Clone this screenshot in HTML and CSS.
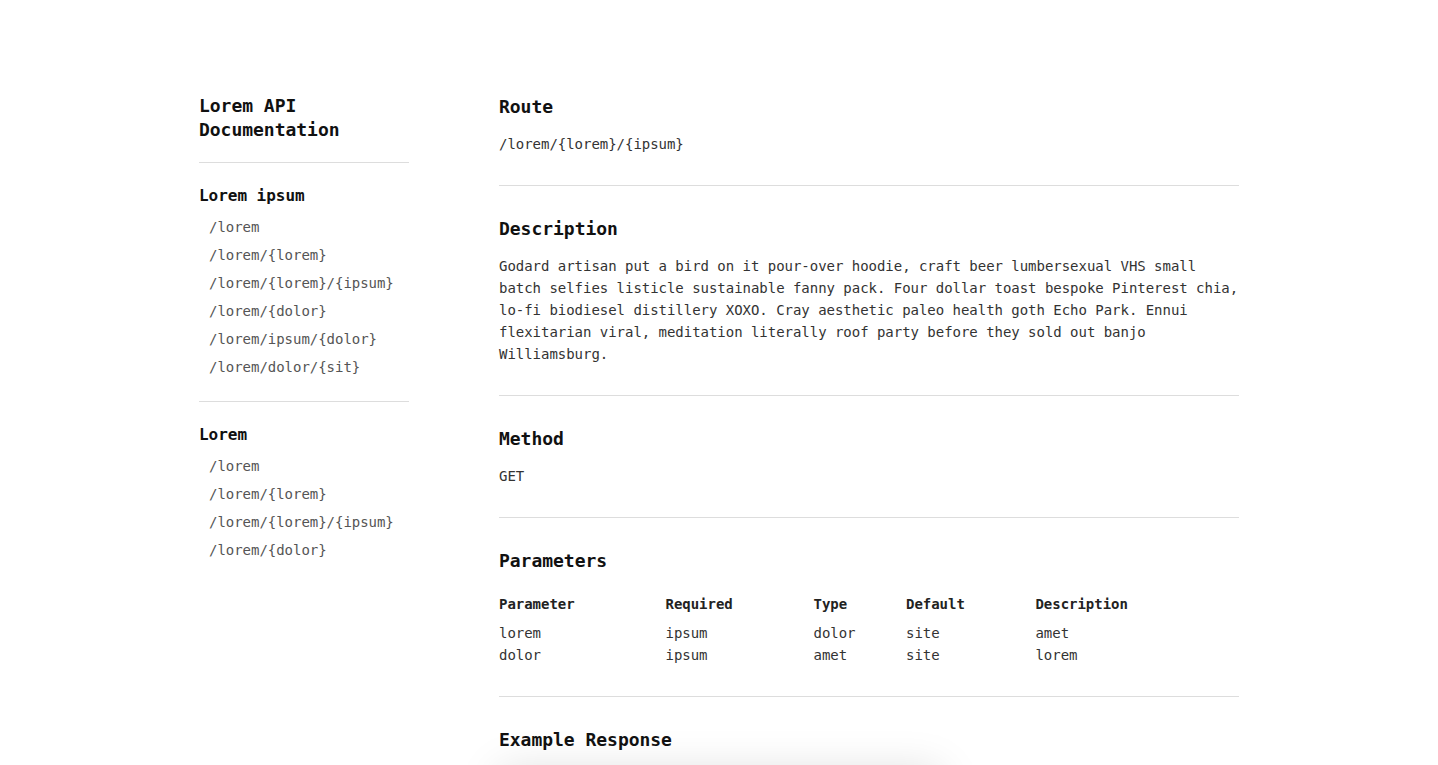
FILE: index.html
```html
<!DOCTYPE html>
<html lang="en">
<head>
<meta charset="utf-8">
<title>Lorem API Documentation</title>
<link rel="stylesheet" href="styles.css">
</head>
<body>
<div class="page">
  <aside class="sidebar">
    <h1 class="doc-title">Lorem API Documentation</h1>
    <div class="nav-group">
      <h3 class="nav-heading">Lorem ipsum</h3>
      <ul class="nav-list">
        <li><a class="nav-link" href="#">/lorem</a></li>
        <li><a class="nav-link" href="#">/lorem/{lorem}</a></li>
        <li><a class="nav-link" href="#">/lorem/{lorem}/{ipsum}</a></li>
        <li><a class="nav-link" href="#">/lorem/{dolor}</a></li>
        <li><a class="nav-link" href="#">/lorem/ipsum/{dolor}</a></li>
        <li><a class="nav-link" href="#">/lorem/dolor/{sit}</a></li>
      </ul>
    </div>
    <div class="nav-group last">
      <h3 class="nav-heading">Lorem</h3>
      <ul class="nav-list">
        <li><a class="nav-link" href="#">/lorem</a></li>
        <li><a class="nav-link" href="#">/lorem/{lorem}</a></li>
        <li><a class="nav-link" href="#">/lorem/{lorem}/{ipsum}</a></li>
        <li><a class="nav-link" href="#">/lorem/{dolor}</a></li>
      </ul>
    </div>
  </aside>
  <main class="content">
    <section class="block first">
      <h2 class="block-title">Route</h2>
      <p class="text">/lorem/{lorem}/{ipsum}</p>
    </section>
    <section class="block">
      <h2 class="block-title">Description</h2>
      <p class="text">Godard artisan put a bird on it pour-over hoodie, craft beer lumbersexual VHS small batch selfies listicle sustainable fanny pack. Four dollar toast bespoke Pinterest chia, lo-fi biodiesel distillery XOXO. Cray aesthetic paleo health goth Echo Park. Ennui flexitarian viral, meditation literally roof party before they sold out banjo Williamsburg.</p>
    </section>
    <section class="block">
      <h2 class="block-title">Method</h2>
      <p class="text">GET</p>
    </section>
    <section class="block">
      <h2 class="block-title">Parameters</h2>
      <div class="params-wrap">
        <table class="params">
          <thead>
            <tr><th>Parameter</th><th>Required</th><th>Type</th><th>Default</th><th>Description</th></tr>
          </thead>
          <tbody>
            <tr><td>lorem</td><td>ipsum</td><td>dolor</td><td>site</td><td>amet</td></tr>
            <tr><td>dolor</td><td>ipsum</td><td>amet</td><td>site</td><td>lorem</td></tr>
          </tbody>
        </table>
      </div>
    </section>
    <section class="block last">
      <h2 class="block-title">Example Response</h2>
      <pre class="response">{
  "lorem": "ipsum",
  "dolor": "sit"
}</pre>
    </section>
  </main>
</div>
</body>
</html>
```

FILE: styles.css
```css
* { box-sizing: border-box; }

html, body {
  margin: 0;
  padding: 0;
  background: #fff;
}

body {
  font-family: "DejaVu Sans Mono", "Liberation Mono", monospace;
  font-size: 14px;
  letter-spacing: -0.03px;
  color: #333;
}

.page {
  display: flex;
  gap: 90px;
  width: 1040px;
  margin: 0 auto;
  padding-top: 95px;
}

.sidebar {
  width: 210px;
  flex-shrink: 0;
  margin-top: -1px;
}

.doc-title {
  margin: 0;
  font-size: 18px;
  line-height: 24px;
  font-weight: bold;
  color: #111;
  padding-bottom: 20px;
  border-bottom: 1px solid #ddd;
}

.nav-group {
  padding: 21px 0 20px;
  border-bottom: 1px solid #ddd;
}

.nav-group.last {
  border-bottom: none;
}

.nav-heading {
  margin: 0 0 5px;
  font-size: 16px;
  line-height: 24px;
  font-weight: bold;
  color: #111;
}

.nav-list {
  list-style: none;
  margin: 0;
  padding: 0 0 0 10px;
}

.nav-link {
  display: block;
  line-height: 28px;
  color: #555;
  text-decoration: none;
}

.content {
  flex: 1;
  min-width: 0;
}

.block {
  padding: 31px 0 30px;
  border-bottom: 1px solid #ddd;
}

.block.first {
  padding-top: 0;
}

.block.last {
  border-bottom: none;
}

.block-title {
  margin: 0 0 14px;
  font-size: 18px;
  line-height: 24px;
  font-weight: bold;
  color: #111;
}

.text {
  margin: 0;
  line-height: 22px;
  color: #333;
}

.params-wrap {
  padding-top: 6px;
}

.params {
  width: 100%;
  border-collapse: collapse;
}

.params th,
.params td {
  padding: 0;
  text-align: left;
  line-height: 22px;
  font-size: 14px;
}

.params th {
  font-weight: bold;
  color: #222;
  padding-bottom: 7px;
}

.params td {
  color: #333;
}

.response {
  width: 442px;
  margin: 18px 0 0;
  padding: 24px;
  font-family: inherit;
  font-size: 14px;
  line-height: 22px;
  background: #fff;
  box-shadow: 0 0 40px rgba(0, 0, 0, 0.13);
}
```
